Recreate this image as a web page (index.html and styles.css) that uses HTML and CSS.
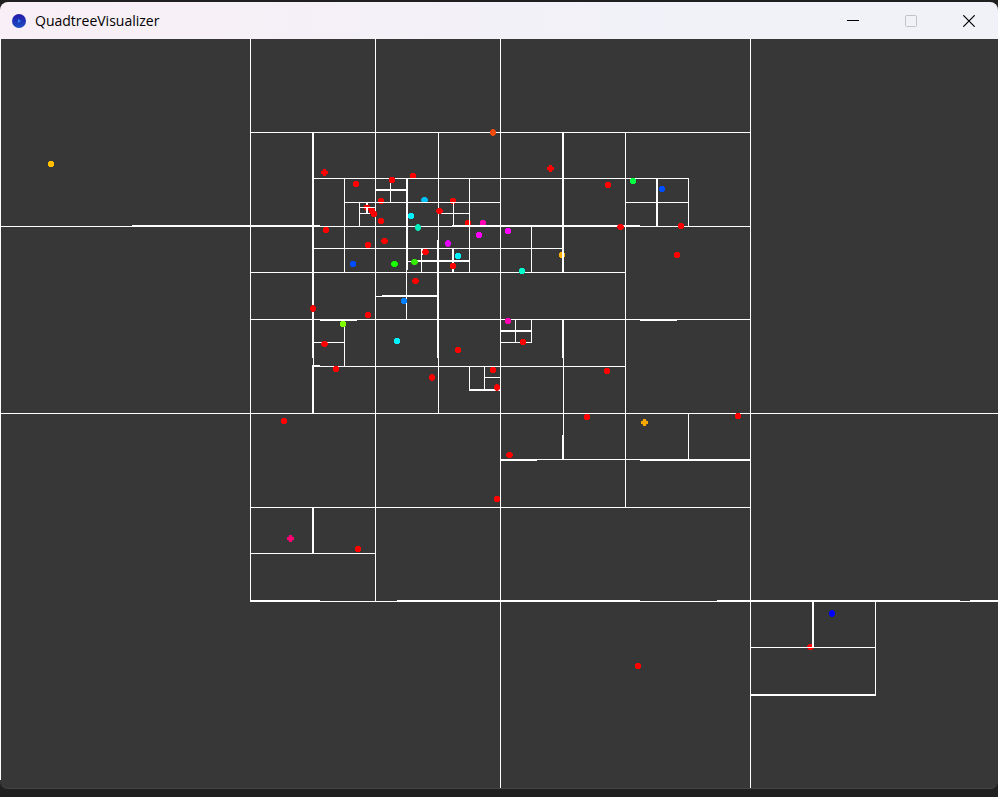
FILE: index.html
```html
<!DOCTYPE html>
<html lang="en">
<head>
<meta charset="utf-8">
<title>QuadtreeVisualizer</title>
<link rel="stylesheet" href="styles.css">
</head>
<body>
<main class="window">
  <header class="titlebar">
    <svg class="app-icon" viewBox="0 0 14 14" aria-hidden="true">
      <defs><linearGradient id="orb" x1="0" y1="0" x2="0" y2="1"><stop offset="0" stop-color="#2418a8"/><stop offset="1" stop-color="#1d4fc4"/></linearGradient></defs>
      <circle cx="7" cy="7" r="7" fill="url(#orb)"/>
      <path d="M6 5l3 2-3 2z" fill="#2f8cf0"/>
    </svg>
    <h1 class="title">QuadtreeVisualizer</h1>
    <div class="controls">
      <button type="button" class="control" aria-label="Minimize"><svg viewBox="0 0 12 12"><path d="M0 5h12v1H0z" fill="#000"/></svg></button>
      <button type="button" class="control" aria-label="Maximize" disabled><svg viewBox="0 0 12 12"><rect x=".5" y=".5" width="11" height="11" rx="1" fill="none" stroke="#c2c3c8"/></svg></button>
      <button type="button" class="control" aria-label="Close"><svg viewBox="0 0 12 12"><path d="M.3.3l11.4 11.4M11.7.3L.3 11.7" fill="none" stroke="#000" stroke-width="1.2"/></svg></button>
    </div>
  </header>
  <svg class="canvas" viewBox="0 39 998 749" preserveAspectRatio="xMinYMin meet" role="img" aria-label="Quadtree with its points">
    <defs>
      <path id="disc" d="M-2-3h4v1h1v4h-1v1h-4v-1h-1v-4h1z"/>
      <g id="plus"><path opacity=".3" d="M-2-2h5v5h-5z"/><path d="M-1-3h3v2h2v3h-2v2h-3v-2h-2v-3h2z"/></g>
      <g id="wide"><path opacity=".4" d="M-2-3h5v6h-5zM-3-2h7v4h-7z"/><path d="M-1-3h3v1h1v1h1v2h-1v1h-1v1h-3v-1h-1v-1h-1v-2h1v-1h1z"/></g>
      <g id="tall"><path opacity=".4" d="M-3-2h6v5h-6zM-2-3h4v7h-4z"/><path d="M-1-3h2v1h1v1h1v3h-1v1h-1v1h-2v-1h-1v-1h-1v-3h1v-1h1z"/></g>
    </defs>

    <!-- points crossed by a cell edge -->
    <g class="red">
      <use href="#disc" x="413" y="176"/><use href="#disc" x="381" y="201"/><use href="#disc" x="453" y="201"/>
      <use href="#disc" x="468" y="223"/><use href="#tall" x="367" y="207"/><use href="#wide" x="810" y="647"/>
    </g>
    <use href="#disc" x="562" y="255" fill="#ffb300"/>
    <use href="#wide" x="424" y="200" fill="#00bfff"/>
    <use href="#disc" x="483" y="223" fill="#ff00b3"/>

    <!-- cell edges -->
    <g class="edges" transform="translate(.5 .5)">
      <path d="M0 39V779M250 39V601M375 39V601M500 39V787M750 39V787"/>
      <path d="M250 132H750M0 226H750M132 225H319M452 225H639M250 319H750M0 413H998M250 507H750M250 601H998"/>
      <path d="M250 600H319M397 600H639M717 600H959M970 600H998"/>
      <path d="M313 132V413M312 132V357M312 365V413M438 132V413M437 240V357M563 132V272M562 132V272M563 319V459M562 319V357M562 435V459M625 132V507"/>
      <path d="M313 178H688M344 178V272M344 202H500M313 248H562M250 272H625"/>
      <path d="M359 202V226M359 207H375M359 213H375M367 203V204M366 203V204M366 207V213M367 207V213"/>
      <path d="M375 189H406M375 190H406M390 182V202M406 178V319M407 178V269M469 178V272M453 202V226M438 213H469"/>
      <path d="M421 248V272M422 248V254M452 248V272M453 248V272M417 260H469M406 261H469"/>
      <path d="M531 226V272M656 178V226M657 178V226M688 178V226M625 202H688"/>
      <path d="M375 296H437M382 295H437M320 320H356M640 320H676"/>
      <path d="M312 365H319M313 366H625M344 319V366M313 342H344"/>
      <path d="M469 366V390M484 366V390M484 377H500M469 389H500M469 390H500"/>
      <path d="M515 319V342M531 319V342M500 330H531M500 331H531M500 342H531"/>
      <path d="M500 459H750M500 460H536M640 460H750M688 413V459"/>
      <path d="M312 507V553M313 507V553M250 553H375"/>
      <path d="M812 601V647M813 601V647M750 647H875M875 601V695M750 694H875M750 695H875"/>
    </g>

    <!-- points -->
    <g class="red">
      <use href="#plus" x="324" y="172"/><use href="#disc" x="356" y="184"/><use href="#disc" x="372" y="211"/><use href="#disc" x="374" y="214"/>
      <use href="#disc" x="326" y="230"/><use href="#disc" x="368" y="245"/><use href="#disc" x="392" y="180"/><use href="#wide" x="439" y="211"/>
      <use href="#disc" x="381" y="221"/><use href="#wide" x="384" y="241"/><use href="#wide" x="425" y="252"/><use href="#disc" x="453" y="266"/>
      <use href="#wide" x="415" y="281"/><use href="#plus" x="550" y="168"/><use href="#disc" x="608" y="185"/><use href="#wide" x="620" y="227"/>
      <use href="#disc" x="681" y="226"/><use href="#disc" x="677" y="255"/><use href="#tall" x="313" y="308"/><use href="#disc" x="368" y="315"/>
      <use href="#wide" x="324" y="344"/><use href="#disc" x="336" y="369"/><use href="#disc" x="284" y="421"/><use href="#disc" x="458" y="350"/>
      <use href="#tall" x="432" y="377"/><use href="#disc" x="493" y="370"/><use href="#tall" x="497" y="387"/><use href="#disc" x="523" y="342"/>
      <use href="#disc" x="607" y="371"/><use href="#disc" x="587" y="417"/><use href="#disc" x="738" y="416"/><use href="#wide" x="509" y="455"/>
      <use href="#disc" x="497" y="499"/><use href="#disc" x="358" y="549"/><use href="#disc" x="638" y="666"/>
    </g>
    <g class="cyan">
      <use href="#disc" x="411" y="216"/><use href="#disc" x="458" y="256"/><use href="#disc" x="397" y="341"/>
    </g>
    <g class="magenta">
      <use href="#disc" x="479" y="235"/><use href="#disc" x="508" y="231"/>
    </g>
    <use href="#tall" x="448" y="243" fill="#e600ff"/>
    <use href="#disc" x="508" y="321" fill="#ff00b3"/>
    <use href="#plus" x="290" y="538" fill="#ff0073"/>
    <use href="#tall" x="493" y="132" fill="#f24a0a"/>
    <use href="#plus" x="644" y="422" fill="#f5a800"/>
    <use href="#disc" x="51" y="164" fill="#ffbf00"/>
    <use href="#disc" x="343" y="324" fill="#80ff00"/>
    <use href="#wide" x="394" y="264" fill="#1aff00"/>
    <use href="#wide" x="414" y="262" fill="#33ee00"/>
    <use href="#disc" x="633" y="181" fill="#00ff40"/>
    <use href="#tall" x="418" y="227" fill="#00eebb"/>
    <use href="#disc" x="522" y="271" fill="#00ffcc"/>
    <use href="#disc" x="404" y="301" fill="#0080ff"/>
    <use href="#disc" x="353" y="264" fill="#004cff"/>
    <use href="#disc" x="662" y="189" fill="#004cff"/>
    <use href="#tall" x="832" y="613" fill="#0000ff"/>
  </svg>
</main>
</body>
</html>
```
FILE: styles.css
```css
* {
  box-sizing: border-box;
}

body {
  margin: 0;
  min-height: 100vh;
  padding: 2px 0 8px;
  display: flex;
  background: #202020;
  font-family: "Open Sans", "Noto Sans", sans-serif;
}

.window {
  flex: 1;
  min-width: 0;
  display: flex;
  flex-direction: column;
  overflow: hidden;
  border-radius: 8px;
  border-bottom: 1px solid #444;
  background: #373737;
}

.titlebar {
  display: flex;
  align-items: center;
  height: 37px;
  padding-left: 12px;
  background: linear-gradient(90deg, #f9eff6, #f0f2f8 70%);
}

.app-icon {
  width: 14px;
  height: 14px;
}

.title {
  margin: 0 auto 0 9px;
  font-size: 14px;
  font-weight: 400;
  line-height: 20px;
  color: #000;
}

.controls {
  display: flex;
  align-self: stretch;
}

.control {
  display: flex;
  align-items: center;
  justify-content: center;
  width: 58px;
  padding: 0;
  border: 0;
  background: none;
}

.control svg {
  width: 12px;
  height: 12px;
}

.canvas {
  display: block;
  width: 100%;
  shape-rendering: crispEdges;
}

.edges {
  fill: none;
  stroke: #fff;
  stroke-width: 1;
  stroke-linecap: square;
}

.red {
  fill: #f00;
}

.cyan {
  fill: #00f2ff;
}

.magenta {
  fill: #f0f;
}
```
